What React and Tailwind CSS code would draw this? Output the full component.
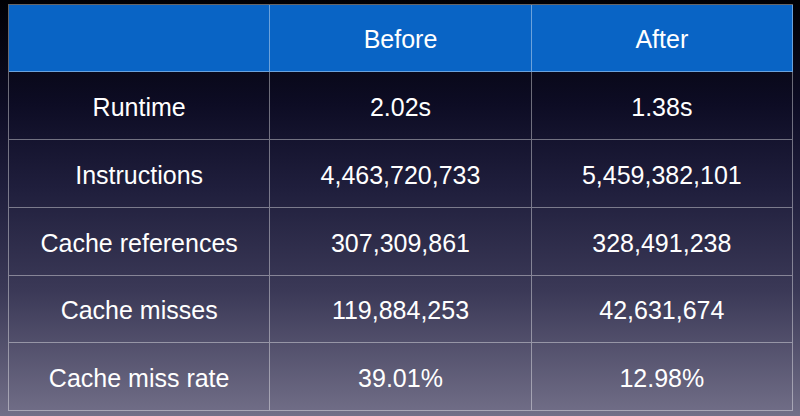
const rows = [
  ["Runtime", "2.02s", "1.38s"],
  ["Instructions", "4,463,720,733", "5,459,382,101"],
  ["Cache references", "307,309,861", "328,491,238"],
  ["Cache misses", "119,884,253", "42,631,674"],
  ["Cache miss rate", "39.01%", "12.98%"],
];

const cell =
  "flex items-center justify-center border-r border-b border-white/40 text-white text-[25px] leading-none pt-[3px]";

export default function App() {
  return (
    <div
      className="w-[800px] h-[416px] pt-[4px] px-[8px] bg-[linear-gradient(to_bottom,#000004_0%,#0d0c24_25%,#1f1e3c_45%,#3b3957_70%,#726f88_100%)]"
      style={{ fontFamily: '"Liberation Sans", Arial, sans-serif' }}
    >
      <div className="grid grid-cols-3 grid-rows-[67px_68px_68px_68px_67px_68px] border-t border-l border-white/40 w-[785px]">
        <div className={`${cell} bg-[#0964c5]`}></div>
        <div className={`${cell} bg-[#0964c5]`}>Before</div>
        <div className={`${cell} bg-[#0964c5]`}>After</div>
        {rows.map((r) =>
          r.map((v, i) => (
            <div key={r[0] + i} className={cell}>
              {v}
            </div>
          ))
        )}
      </div>
    </div>
  );
}
